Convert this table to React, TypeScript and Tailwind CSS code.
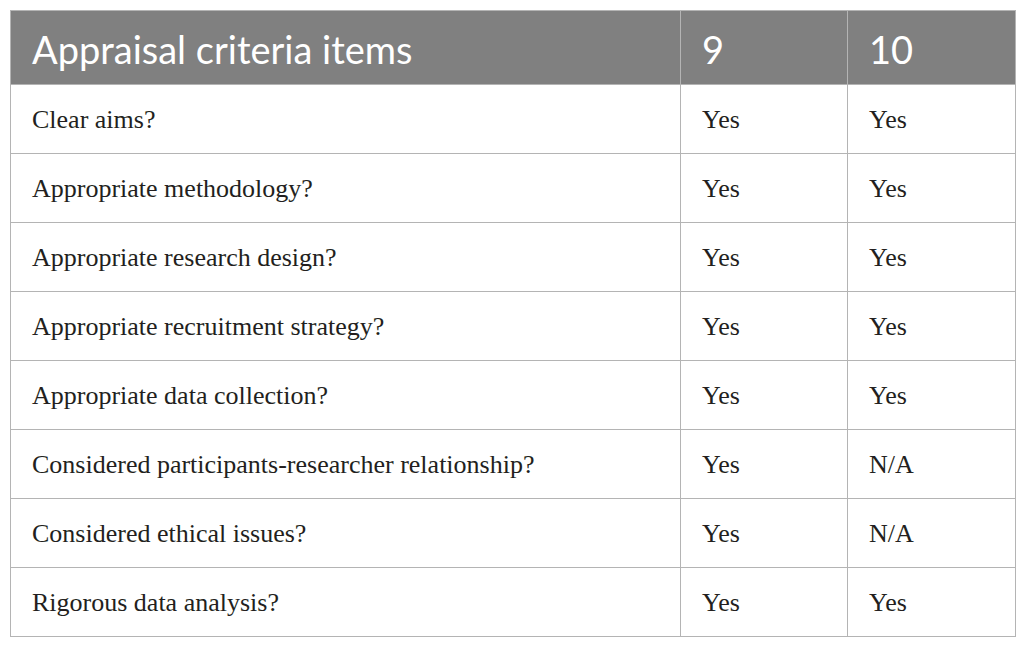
const rows: [string, string, string][] = [
  ['Clear aims?', 'Yes', 'Yes'],
  ['Appropriate methodology?', 'Yes', 'Yes'],
  ['Appropriate research design?', 'Yes', 'Yes'],
  ['Appropriate recruitment strategy?', 'Yes', 'Yes'],
  ['Appropriate data collection?', 'Yes', 'Yes'],
  ['Considered participants-researcher relationship?', 'Yes', 'N/A'],
  ['Considered ethical issues?', 'Yes', 'N/A'],
  ['Rigorous data analysis?', 'Yes', 'Yes'],
]

const App = () => {
  return (
    <div className="bg-white w-[1025px] h-[649px] pt-[10px] pl-[10px]">
      <table className="border-collapse w-[1005px] table-fixed">
        <colgroup>
          <col className="w-[670px]" />
          <col className="w-[167px]" />
          <col className="w-[168px]" />
        </colgroup>
        <thead>
          <tr className="bg-[#808080] h-[74px]">
            {['Appraisal criteria items', '9', '10'].map((h) => (
              <th
                key={h}
                className="border border-[#b4b4b4] text-left align-middle pl-[21px] pt-[2px] text-white font-normal text-[38px] leading-none font-['Lato',sans-serif]"
              >
                {h}
              </th>
            ))}
          </tr>
        </thead>
        <tbody>
          {rows.map((r) => (
            <tr key={r[0]} className="h-[69px]">
              {r.map((c, i) => (
                <td
                  key={i}
                  className="border border-[#b4b4b4] align-middle pl-[21px] pt-[2px] text-[#231f20] text-[26px] leading-none font-['Liberation_Serif',serif]"
                >
                  {c}
                </td>
              ))}
            </tr>
          ))}
        </tbody>
      </table>
    </div>
  )
}

export default App
